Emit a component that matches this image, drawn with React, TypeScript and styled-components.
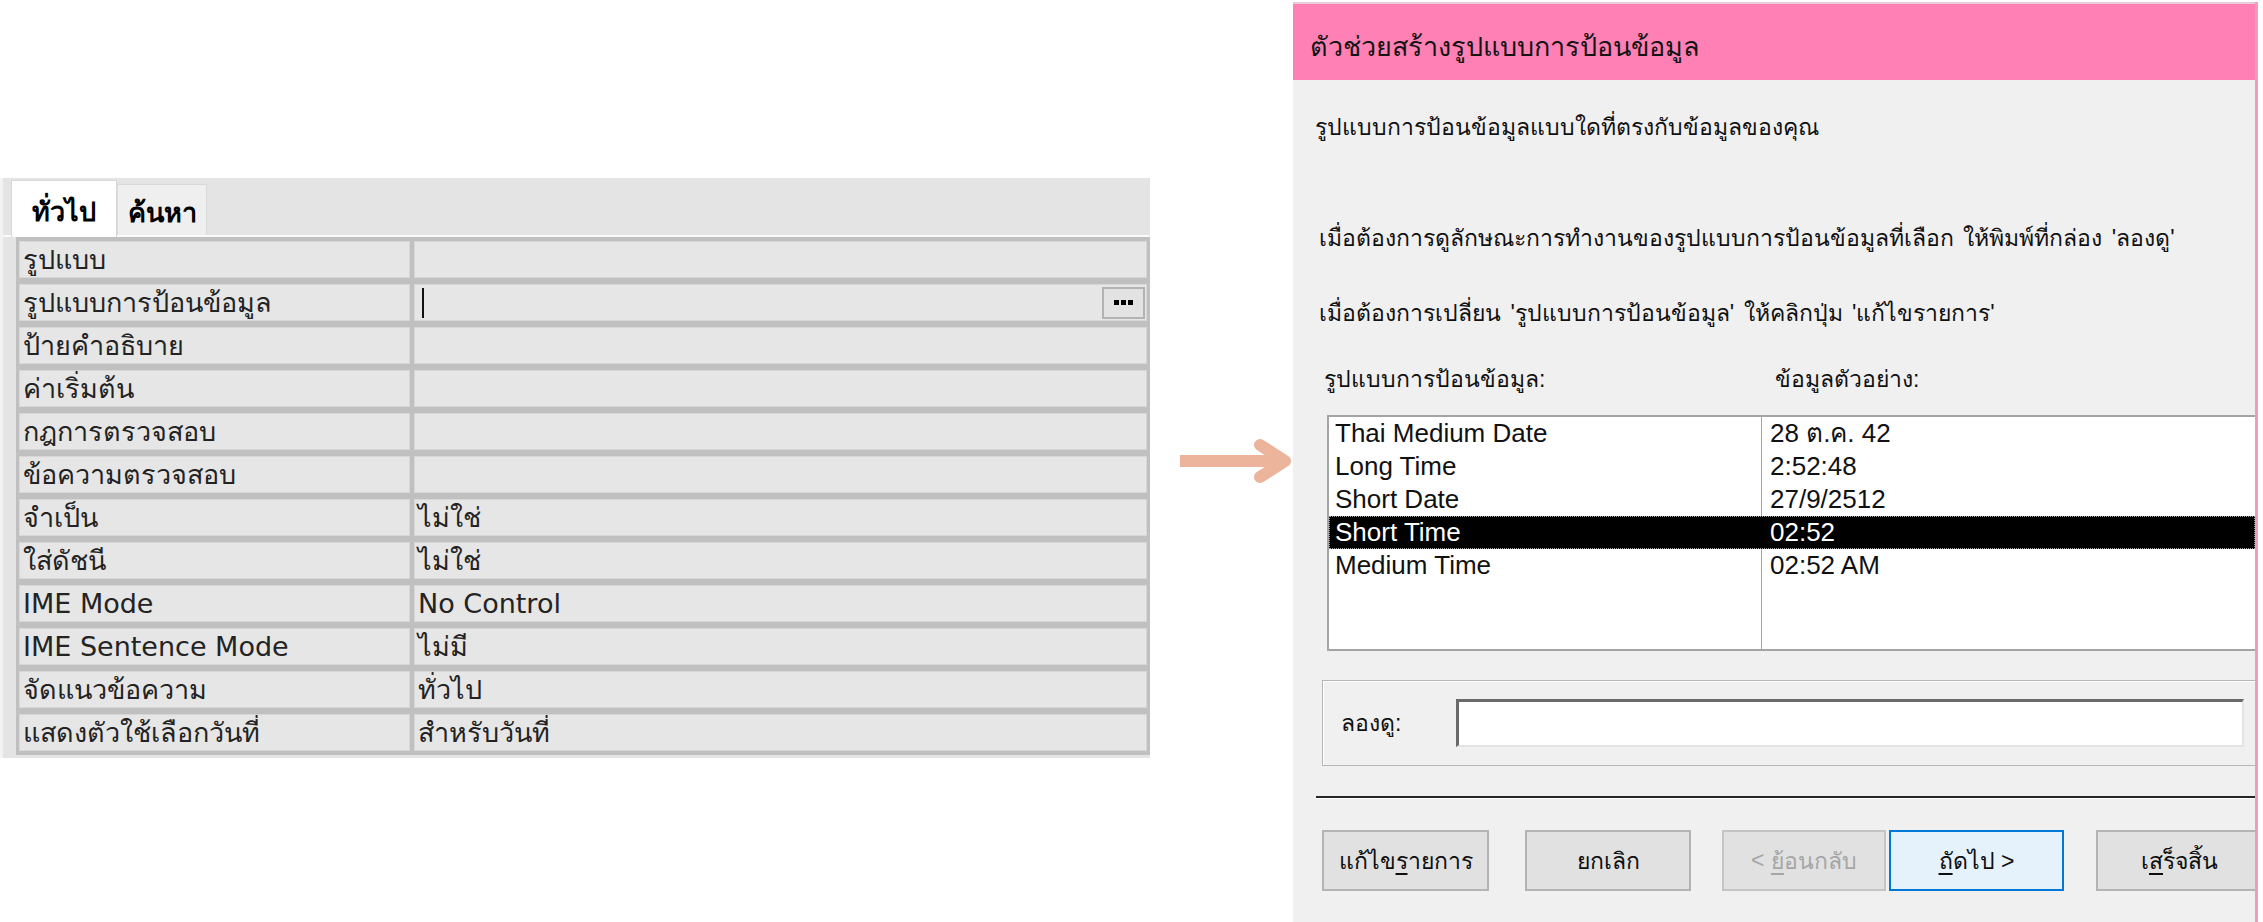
import React from "react";
import styled, { createGlobalStyle } from "styled-components";

const GlobalStyle = createGlobalStyle`
  html, body {
    margin: 0;
    padding: 0;
    background: #ffffff;
  }
  body {
    width: 2263px;
    height: 922px;
    overflow: hidden;
    font-family: "DejaVu Sans", "Noto Sans", sans-serif;
  }
`;

const Page = styled.div`
  display: flex;
  align-items: flex-start;
  width: 2263px;
  height: 922px;
  overflow: hidden;
`;

/* ---------- left: property sheet ---------- */

const PropertySheet = styled.div`
  margin-top: 178px;
  width: 1147px;
  height: 580px;
  background: #e4e4e4;
  border-left: 3px solid #f3f3f3;
  display: flex;
  flex-direction: column;
  font-family: "DejaVu Sans", "Noto Sans", sans-serif;
`;

const TabStrip = styled.div`
  display: flex;
  align-items: flex-end;
  height: 57px;
  padding-left: 8px;
  border-bottom: 2px solid #fafafa;
`;

const Tab = styled.div<{ $active?: boolean }>`
  display: flex;
  align-items: center;
  justify-content: center;
  box-sizing: border-box;
  height: ${(p) => (p.$active ? "57px" : "51px")};
  width: ${(p) => (p.$active ? "106px" : "90px")};
  margin-bottom: ${(p) => (p.$active ? "-2px" : "0")};
  background: ${(p) => (p.$active ? "#ffffff" : "#efefef")};
  border: 1px solid #d9d9d9;
  border-bottom: none;
  font-size: 27px;
  font-weight: 600;
  color: #000;
  padding-top: 4px;
`;

const PropGrid = styled.div`
  display: grid;
  grid-template-columns: 391px 1fr;
  column-gap: 4px;
  row-gap: 6px;
  margin-left: 13px;
  padding: 4px 3px 4px 3px;
  background: #c0c0c0;
`;

const PropCell = styled.div`
  box-sizing: border-box;
  height: 37px;
  display: flex;
  align-items: center;
  justify-content: space-between;
  padding-left: 3px;
  background: #e6e6e6;
  border: 1px solid #d7d7d7;
  font-size: 27px;
  color: #232323;
  white-space: nowrap;
  overflow: hidden;
`;

const Caret = styled.span`
  display: block;
  width: 2px;
  height: 30px;
  margin-left: 4px;
  background: #111;
`;

const BuildButton = styled.div`
  box-sizing: border-box;
  width: 43px;
  height: 32px;
  margin-right: 1px;
  display: flex;
  align-items: center;
  justify-content: center;
  gap: 2px;
  background: #e3e3e3;
  border: 2px solid #b3b3b3;
`;

const Dot = styled.span`
  width: 5px;
  height: 5px;
  background: #000;
`;

/* ---------- arrow ---------- */

const ArrowWrap = styled.div`
  margin-top: 436px;
  margin-left: 28px;
  width: 115px;
  height: 50px;
`;

/* ---------- right: input mask wizard ---------- */

const Wizard = styled.div`
  margin-top: 2px;
  width: 962px;
  height: 920px;
  background: #f0f0f0;
  border-right: 3px solid #f29bbf;
  display: flex;
  flex-direction: column;
  overflow: hidden;
  font-family: "Liberation Sans", "Noto Sans", sans-serif;
  color: #111;
`;

const TitleBar = styled.div`
  height: 78px;
  flex-shrink: 0;
  background: #ff80b4;
  border-top: 2px solid #e8ccd7;
  display: flex;
  align-items: center;
  padding-left: 17px;
  padding-top: 8px;
  box-sizing: border-box;
  font-size: 27px;
  color: #141414;
`;

const Body = styled.div`
  display: flex;
  flex-direction: column;
  padding-left: 22px;
`;

const Line = styled.div<{ $top: number; $indent?: number }>`
  margin-top: ${(p) => p.$top}px;
  margin-left: ${(p) => p.$indent ?? 0}px;
  height: 34px;
  line-height: 34px;
  font-size: 23px;
  white-space: nowrap;
  word-spacing: 3px;
`;

const ColumnLabels = styled.div`
  display: flex;
  margin-top: 32px;
  padding-left: 9px;
  height: 34px;
  line-height: 34px;
  font-size: 23px;
`;

const ColumnLabel = styled.span<{ $width?: number }>`
  width: ${(p) => (p.$width ? `${p.$width}px` : "auto")};
`;

const ListBox = styled.div`
  margin-top: 19px;
  margin-left: 12px;
  height: 236px;
  box-sizing: border-box;
  border: 2px solid #a4a4a4;
  border-right: none;
  background: linear-gradient(
      to right,
      transparent 432px,
      #a6a6a6 432px,
      #a6a6a6 433px,
      transparent 433px
    ),
    #ffffff;
`;

const ListRow = styled.div<{ $selected?: boolean }>`
  display: grid;
  grid-template-columns: 432px 1fr;
  box-sizing: border-box;
  height: 33px;
  line-height: 31px;
  font-size: 26px;
  color: ${(p) => (p.$selected ? "#ffffff" : "#111111")};
  background: ${(p) => (p.$selected ? "#000000" : "transparent")};
  border: 1px ${(p) => (p.$selected ? "dotted #9a9a9a" : "solid transparent")};
`;

const ListCell = styled.span<{ $second?: boolean }>`
  padding-left: ${(p) => (p.$second ? "8px" : "5px")};
  white-space: nowrap;
`;

const TryGroup = styled.div`
  margin-top: 29px;
  margin-left: 7px;
  height: 86px;
  box-sizing: border-box;
  border: 1px solid #b5b5b5;
  border-right: none;
  box-shadow: inset 1px 1px 0 #ffffff;
  display: flex;
  align-items: center;
  padding-left: 18px;
`;

const TryLabel = styled.span`
  width: 115px;
  font-size: 23px;
`;

const TryInput = styled.div`
  flex: 1;
  margin-right: 11px;
  height: 48px;
  box-sizing: border-box;
  background: #ffffff;
  border-top: 3px solid #6a6a6a;
  border-left: 3px solid #6a6a6a;
  border-bottom: 2px solid #e4e4e4;
  border-right: 2px solid #e4e4e4;
`;

const Separator = styled.div`
  margin-top: 30px;
  margin-left: 1px;
  height: 2px;
  background: #262626;
  border-bottom: 1px solid #ffffff;
`;

const ButtonRow = styled.div`
  display: flex;
  margin-top: 31px;
  margin-left: 7px;
`;

const WizButton = styled.div<{
  $width: number;
  $gap: number;
  $disabled?: boolean;
  $default?: boolean;
}>`
  flex-shrink: 0;
  box-sizing: border-box;
  width: ${(p) => p.$width}px;
  height: 61px;
  margin-left: ${(p) => p.$gap}px;
  display: flex;
  align-items: center;
  justify-content: center;
  font-size: 23px;
  color: ${(p) => (p.$disabled ? "#a6a6a6" : "#0f0f0f")};
  background: ${(p) => (p.$default ? "#e5f1fb" : "#e1e1e1")};
  border: ${(p) =>
    p.$default ? "2px solid #0078d7" : `2px solid ${p.$disabled ? "#c4c4c4" : "#b4b4b4"}`};
  white-space: pre;
  u {
    text-underline-offset: 4px;
  }
`;

const properties: [string, string][] = [
  ["รูปแบบ", ""],
  ["รูปแบบการป้อนข้อมูล", "__caret__"],
  ["ป้ายคำอธิบาย", ""],
  ["ค่าเริ่มต้น", ""],
  ["กฎการตรวจสอบ", ""],
  ["ข้อความตรวจสอบ", ""],
  ["จำเป็น", "ไม่ใช่"],
  ["ใส่ดัชนี", "ไม่ใช่"],
  ["IME Mode", "No Control"],
  ["IME Sentence Mode", "ไม่มี"],
  ["จัดแนวข้อความ", "ทั่วไป"],
  ["แสดงตัวใช้เลือกวันที่", "สำหรับวันที่"],
];

const masks: [string, string][] = [
  ["Thai Medium Date", "28 ต.ค. 42"],
  ["Long Time", "2:52:48"],
  ["Short Date", "27/9/2512"],
  ["Short Time", "02:52"],
  ["Medium Time", "02:52 AM"],
];

const Arrow = () => (
  <svg width="115" height="50" viewBox="0 0 115 50">
    <line x1="2" y1="25" x2="104" y2="25" stroke="#ecb59b" strokeWidth="12" />
    <polyline
      points="82,9 107,25 82,41"
      fill="none"
      stroke="#ecb59b"
      strokeWidth="12"
      strokeLinecap="round"
      strokeLinejoin="round"
    />
  </svg>
);

export default function App() {
  return (
    <>
      <GlobalStyle />
      <Page>
        <PropertySheet>
          <TabStrip>
            <Tab $active>ทั่วไป</Tab>
            <Tab>ค้นหา</Tab>
          </TabStrip>
          <PropGrid>
            {properties.map(([label, value]) => (
              <React.Fragment key={label}>
                <PropCell>{label}</PropCell>
                <PropCell>
                  {value === "__caret__" ? (
                    <>
                      <Caret />
                      <BuildButton>
                        <Dot />
                        <Dot />
                        <Dot />
                      </BuildButton>
                    </>
                  ) : (
                    value
                  )}
                </PropCell>
              </React.Fragment>
            ))}
          </PropGrid>
        </PropertySheet>

        <ArrowWrap>
          <Arrow />
        </ArrowWrap>

        <Wizard>
          <TitleBar>ตัวช่วยสร้างรูปแบบการป้อนข้อมูล</TitleBar>
          <Body>
            <Line $top={30}>รูปแบบการป้อนข้อมูลแบบใดที่ตรงกับข้อมูลของคุณ</Line>
            <Line $top={77} $indent={4}>
              เมื่อต้องการดูลักษณะการทำงานของรูปแบบการป้อนข้อมูลที่เลือก ให้พิมพ์ที่กล่อง 'ลองดู'
            </Line>
            <Line $top={41} $indent={4}>
              เมื่อต้องการเปลี่ยน 'รูปแบบการป้อนข้อมูล' ให้คลิกปุ่ม 'แก้ไขรายการ'
            </Line>
            <ColumnLabels>
              <ColumnLabel $width={451}>รูปแบบการป้อนข้อมูล:</ColumnLabel>
              <ColumnLabel>ข้อมูลตัวอย่าง:</ColumnLabel>
            </ColumnLabels>
            <ListBox>
              {masks.map(([name, sample]) => (
                <ListRow key={name} $selected={name === "Short Time"}>
                  <ListCell>{name}</ListCell>
                  <ListCell $second>{sample}</ListCell>
                </ListRow>
              ))}
            </ListBox>
            <TryGroup>
              <TryLabel>ลองดู:</TryLabel>
              <TryInput />
            </TryGroup>
            <Separator />
            <ButtonRow>
              <WizButton $width={167} $gap={0}>
                แก้ไข<u>ร</u>ายการ
              </WizButton>
              <WizButton $width={166} $gap={36}>
                ยกเลิก
              </WizButton>
              <WizButton $width={164} $gap={31} $disabled>
                {"< "}
                <u>ย้</u>อนกลับ
              </WizButton>
              <WizButton $width={175} $gap={3} $default>
                <u>ถั</u>
                {"ดไป >"}
              </WizButton>
              <WizButton $width={167} $gap={32}>
                เ<u>ส</u>ร็จสิ้น
              </WizButton>
            </ButtonRow>
          </Body>
        </Wizard>
      </Page>
    </>
  );
}
